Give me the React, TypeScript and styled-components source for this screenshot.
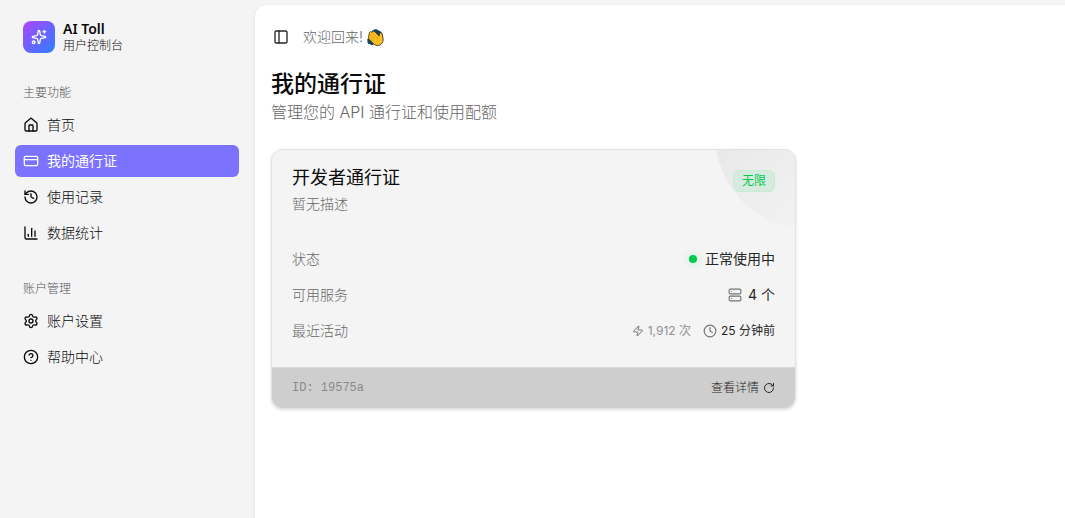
import React from "react";
import styled, { createGlobalStyle, css } from "styled-components";
import {
  ChartColumn,
  CircleQuestionMark,
  Clock,
  CreditCard,
  History,
  House,
  PanelLeft,
  RotateCw,
  Server,
  Settings,
  Sparkles,
  Zap,
  type LucideIcon,
} from "lucide-react";

const GlobalStyle = createGlobalStyle`
  *, *::before, *::after { box-sizing: border-box; }
  body {
    margin: 0;
    background: #f4f4f4;
    color: #0a0a0a;
    font-family: Inter, "Noto Sans CJK SC", sans-serif;
    font-size: 14px;
    font-weight: 300;
    line-height: 20px;
  }
  h1, h2, p, dl, dd, ul { margin: 0; padding: 0; }
  button { font: inherit; color: inherit; background: none; border: 0; padding: 0; cursor: pointer; }
`;

const Shell = styled.div`
  display: flex;
  min-height: 100vh;
`;

const Sidebar = styled.aside`
  flex: 0 0 255px;
  padding: 13px 16px 16px 15px;
`;

const Brand = styled.a`
  display: flex;
  align-items: center;
  gap: 8px;
  height: 48px;
  padding: 0 8px;
  color: inherit;
  text-decoration: none;
`;

const Logo = styled.span`
  display: grid;
  place-items: center;
  width: 32px;
  height: 32px;
  border-radius: 8px;
  color: #fff;
  background: linear-gradient(135deg, #ad46ff, #2b7fff);
`;

const BrandText = styled.span`
  display: grid;
  font-size: 12px;
  line-height: 16px;
`;

const BrandName = styled.strong`
  font-family: "Noto Sans", sans-serif;
  font-size: 14px;
  font-weight: 600;
  line-height: 18px;
`;

const NavGroup = styled.section`
  padding-top: 16px;
  & + & { padding-top: 24px; }
`;

const GroupTitle = styled.h2`
  display: flex;
  align-items: center;
  height: 32px;
  padding: 0 8px;
  color: #555;
  font-size: 12px;
  font-weight: 300;
`;

const NavList = styled.ul`
  display: grid;
  gap: 4px;
  list-style: none;
`;

const NavLink = styled.a<{ $active?: boolean }>`
  display: flex;
  align-items: center;
  gap: 8px;
  height: 32px;
  padding: 0 8px;
  border-radius: 6px;
  color: inherit;
  text-decoration: none;
  ${(p) => p.$active && css`
    color: #fff;
    background: #7b73ff;
    font-weight: 400;
  `}
`;

const Main = styled.main`
  flex: 1;
  min-width: 0;
  margin-top: 5px;
  padding: 18px 16px;
  border-radius: 12px 0 0 0;
  background: #fff;
  box-shadow: 0 1px 3px rgba(0, 0, 0, 0.12);
`;

const TopBar = styled.header`
  display: flex;
  align-items: center;
  gap: 8px;
  height: 28px;
  margin-bottom: 17px;
  color: #666;
`;

const ToggleButton = styled.button`
  display: grid;
  place-items: center start;
  width: 24px;
  height: 28px;
  padding-left: 2px;
  color: #262626;
`;

const Welcome = styled.p`
  display: flex;
  align-items: center;
  gap: 4px;
`;

const Title = styled.h1`
  font-size: 23px;
  font-weight: 500;
  line-height: 32px;
`;

const Subtitle = styled.p`
  color: #666;
  font-size: 16px;
  line-height: 24px;
`;

const Card = styled.article`
  position: relative;
  overflow: hidden;
  max-width: 525px;
  margin-top: 25px;
  border: 1px solid #e2e2e2;
  border-radius: 12px;
  background: #f4f4f4;
  box-shadow: 0 1px 3px rgba(0, 0, 0, 0.15);

  &::before {
    content: "";
    position: absolute;
    top: -112px;
    right: -112px;
    width: 192px;
    height: 192px;
    border-radius: 50%;
    background: linear-gradient(135deg, #e2e2e2, #f4f4f4 80%);
  }
`;

const CardHeader = styled.header`
  position: relative;
  display: flex;
  justify-content: space-between;
  align-items: flex-start;
  padding: 14px 20px 0;
`;

const CardTitle = styled.h2`
  font-size: 18px;
  font-weight: 400;
  line-height: 28px;
`;

const Muted = styled.p`
  color: #666;
  line-height: 24px;
`;

const Badge = styled.span`
  margin-top: 6px;
  padding: 2px 8px;
  border: 1px solid #c5edd2;
  border-radius: 6px;
  color: #00c950;
  background: #d7eadf;
  font-size: 12px;
  font-weight: 400;
  line-height: 16px;
`;

const Details = styled.dl`
  display: grid;
  gap: 16px;
  padding: 33px 20px 26px;
`;

const DetailRow = styled.div`
  display: flex;
  justify-content: space-between;
  align-items: center;
  height: 20px;
`;

const Label = styled.dt`
  color: #666;
`;

const Value = styled.dd<{ $small?: boolean }>`
  display: flex;
  align-items: center;
  gap: ${(p) => (p.$small ? 12 : 6)}px;
  color: #262626;
  font-size: ${(p) => (p.$small ? 12 : 14)}px;
  font-weight: 400;
  svg { color: #737373; }
`;

const Metric = styled.span<{ $muted?: boolean }>`
  display: flex;
  align-items: center;
  gap: 4px;
  color: ${(p) => (p.$muted ? "#8f8f8f" : "inherit")};
`;

const StatusDot = styled.span`
  width: 8px;
  height: 8px;
  margin-right: 2px;
  border-radius: 50%;
  background: #00c950;
  box-shadow: 0 0 8px rgba(0, 201, 80, 0.25);
`;

const CardFooter = styled.footer`
  display: flex;
  justify-content: space-between;
  align-items: center;
  height: 41px;
  padding: 0 20px;
  border-top: 1px solid #d8d8d8;
  background: #cecece;
  font-size: 12px;
`;

const PassId = styled.span`
  color: #8a8a8a;
  font-family: "Liberation Mono", monospace;
`;

const DetailButton = styled.button`
  display: flex;
  align-items: center;
  gap: 4px;
  color: #262626;
`;

const ClapIcon = () => (
  <svg width="17" height="17" viewBox="0 0 17 17" aria-hidden="true">
    <g fill="#17475a">
      <path d="M5.500 1.200 9 .1l5.200 2.600 1.600 4.500-3 1L5 3.600z" />
      <path d="M.2 10.200 2.600 8.900l5.400 5.400-2.600 2-4.700-1.900z" />
    </g>
    <path
      d="M2.700 3.100c.8-.8 1.700-.4 2.400.2C5.300 2 6.800 1.700 7.700 2.600l4.500 4.300.4-2.300c.2-1.200 2-1.300 2.400 0l1 4.500c.4 2.600-.3 4.700-2 6.200-2.300 1.800-5.500 1.500-7.600-.6l-4.500-4.500c-.8-.8-.5-1.700.1-2.100-.9-1-.6-1.900.2-2.300-.5-1 .1-1.900.5-2.700z"
      fill="#ffc020"
      stroke="#1f1f1a"
      strokeWidth=".8"
    />
    <path
      d="m5.100 3.300 4.600 4.800M2.900 5l5 5M2.200 7.800l4.300 4.300M12.200 6.900c-2.200 1.100-2.300 2.900-1.200 4.400"
      fill="none"
      stroke="#b77a18"
      strokeWidth=".5"
      strokeLinecap="round"
    />
  </svg>
);

type NavItem = { label: string; icon: LucideIcon; active?: boolean };

const groups: { title: string; items: NavItem[] }[] = [
  {
    title: "主要功能",
    items: [
      { label: "首页", icon: House },
      { label: "我的通行证", icon: CreditCard, active: true },
      { label: "使用记录", icon: History },
      { label: "数据统计", icon: ChartColumn },
    ],
  },
  {
    title: "账户管理",
    items: [
      { label: "账户设置", icon: Settings },
      { label: "帮助中心", icon: CircleQuestionMark },
    ],
  },
];

export default function App() {
  return (
    <>
      <GlobalStyle />
      <Shell>
        <Sidebar>
          <Brand href="#">
            <Logo><Sparkles size={16} /></Logo>
            <BrandText>
              <BrandName>AI Toll</BrandName>
              <span>用户控制台</span>
            </BrandText>
          </Brand>
          <nav>
            {groups.map((group) => (
              <NavGroup key={group.title}>
                <GroupTitle>{group.title}</GroupTitle>
                <NavList>
                  {group.items.map(({ label, icon: Icon, active }) => (
                    <li key={label}>
                      <NavLink href="#" $active={active} aria-current={active ? "page" : undefined}>
                        <Icon size={16} />
                        <span>{label}</span>
                      </NavLink>
                    </li>
                  ))}
                </NavList>
              </NavGroup>
            ))}
          </nav>
        </Sidebar>
        <Main>
          <TopBar>
            <ToggleButton type="button" aria-label="切换侧边栏"><PanelLeft size={16} /></ToggleButton>
            <Welcome>欢迎回来! <ClapIcon /></Welcome>
          </TopBar>
          <Title>我的通行证</Title>
          <Subtitle>管理您的 API 通行证和使用配额</Subtitle>
          <Card>
            <CardHeader>
              <div>
                <CardTitle>开发者通行证</CardTitle>
                <Muted>暂无描述</Muted>
              </div>
              <Badge>无限</Badge>
            </CardHeader>
            <Details>
              <DetailRow>
                <Label>状态</Label>
                <Value><StatusDot />正常使用中</Value>
              </DetailRow>
              <DetailRow>
                <Label>可用服务</Label>
                <Value><Server size={14} />4 个</Value>
              </DetailRow>
              <DetailRow>
                <Label>最近活动</Label>
                <Value $small>
                  <Metric $muted><Zap size={12} />1,912 次</Metric>
                  <Metric><Clock size={14} />25 分钟前</Metric>
                </Value>
              </DetailRow>
            </Details>
            <CardFooter>
              <PassId>ID: 19575a</PassId>
              <DetailButton type="button">查看详情 <RotateCw size={12} /></DetailButton>
            </CardFooter>
          </Card>
        </Main>
      </Shell>
    </>
  );
}
